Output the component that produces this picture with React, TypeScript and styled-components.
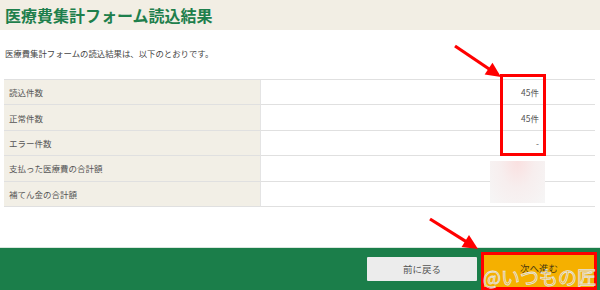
import React from "react";
import styled, { createGlobalStyle } from "styled-components";

const Global = createGlobalStyle`
  html, body { margin: 0; padding: 0; background: #fff; }
  body { font-family: "Noto Sans CJK JP", "Noto Sans", sans-serif; }
`;

const Page = styled.div`
  position: relative;
  width: 600px;
  height: 290px;
  overflow: hidden;
  background: #fff;
  display: flex;
  flex-direction: column;
`;

const Header = styled.header`
  height: 30px;
  flex-shrink: 0;
  background: #f2eee4;
  display: flex;
  align-items: center;
  padding-left: 5px;
`;

const Title = styled.h1`
  margin: 0;
  font-size: 16px;
  font-weight: 700;
  color: #1e7f4c;
  line-height: 1;
`;

const Lead = styled.p`
  margin: 17px 0 0 5px;
  font-size: 8.4px;
  color: #444;
  line-height: 12px;
`;

const Table = styled.div`
  margin: 20px 5px 0 4px;
  display: grid;
  grid-template-columns: 257px 1fr;
  border-top: 1.5px solid #e0e0e0;
`;

const LabelCell = styled.div`
  height: 24.4px;
  background: #f2efe6;
  border-bottom: 1.5px solid #e0e0e0;
  border-right: 1.5px solid #e4e4e4;
  display: flex;
  align-items: center;
  padding-left: 5px;
  font-size: 8.5px;
  color: #555;
`;

const ValueCell = styled.div`
  height: 24.4px;
  border-bottom: 1.5px solid #e0e0e0;
  display: flex;
  align-items: center;
  justify-content: flex-end;
  padding-right: 56px;
  font-size: 8.5px;
  color: #555;
`;

const Footer = styled.footer`
  margin-top: auto;
  height: 43px;
  flex-shrink: 0;
  background: #1b7e4a;
  border-top: 1px solid #d9e6de;
  display: flex;
  align-items: flex-start;
  justify-content: flex-end;
  gap: 6px;
  padding: 0 5px 0 0;
  box-sizing: border-box;
`;

const Button = styled.button<{ $primary?: boolean }>`
  font-family: "Noto Sans CJK JP", sans-serif;
  border: none;
  margin: ${(p) => (p.$primary ? "7px 0 0" : "9px 0 0")};
  width: ${(p) => (p.$primary ? "112px" : "110px")};
  height: ${(p) => (p.$primary ? "32px" : "24px")};
  background: ${(p) => (p.$primary ? "#f5b000" : "#ececec")};
  color: ${(p) => (p.$primary ? "#4a3a10" : "#555")};
  font-size: 9.5px;
  border-radius: 1px;
  padding: ${(p) => (p.$primary ? "0 0 6px" : "0")};
`;

const RedBox = styled.div<{ $x: number; $y: number; $w: number; $h: number }>`
  position: absolute;
  left: ${(p) => p.$x}px;
  top: ${(p) => p.$y}px;
  width: ${(p) => p.$w}px;
  height: ${(p) => p.$h}px;
  border: 3px solid #f00;
  box-sizing: border-box;
  pointer-events: none;
`;

const Smudge = styled.div`
  position: absolute;
  left: 490px;
  top: 161px;
  width: 55px;
  height: 42px;
  background: radial-gradient(ellipse at 50% 0%, #fae0e0 0%, #f7eeee 45%, #f6f6f6 100%);
`;

const Watermark = styled.div`
  position: absolute;
  left: 483px;
  top: 263px;
  font-size: 19px;
  line-height: 28px;
  white-space: nowrap;
  color: rgba(255, 255, 255, 0.08);
  -webkit-text-stroke: 0.8px #e4e4e4;
  pointer-events: none;
`;

const Overlay = styled.svg`
  position: absolute;
  left: 0;
  top: 0;
  pointer-events: none;
`;

function Arrow({ x1, y1, x2, y2 }: { x1: number; y1: number; x2: number; y2: number }) {
  const dx = x2 - x1;
  const dy = y2 - y1;
  const len = Math.hypot(dx, dy);
  const ux = dx / len;
  const uy = dy / len;
  const head = 15;
  const half = 7;
  const bx = x2 - ux * head;
  const by = y2 - uy * head;
  const px = -uy;
  const py = ux;
  return (
    <g>
      <line x1={x1} y1={y1} x2={bx + ux * 2} y2={by + uy * 2} stroke="#f00" strokeWidth={3.2} />
      <polygon
        points={`${x2},${y2} ${bx + px * half},${by + py * half} ${bx - px * half},${by - py * half}`}
        fill="#f00"
      />
    </g>
  );
}

const rows: [string, string][] = [
  ["読込件数", "45件"],
  ["正常件数", "45件"],
  ["エラー件数", "-"],
  ["支払った医療費の合計額", ""],
  ["補てん金の合計額", ""],
];

export default function App() {
  return (
    <>
      <Global />
      <Page>
        <Header>
          <Title>医療費集計フォーム読込結果</Title>
        </Header>
        <Lead>医療費集計フォームの読込結果は、以下のとおりです。</Lead>
        <Table>
          {rows.map(([label, value]) => (
            <React.Fragment key={label}>
              <LabelCell>{label}</LabelCell>
              <ValueCell>{value}</ValueCell>
            </React.Fragment>
          ))}
        </Table>
        <Footer>
          <Button>前に戻る</Button>
          <Button $primary>次へ進む</Button>
        </Footer>
        <Smudge />
        <RedBox $x={500} $y={74} $w={46} $h={82} />
        <RedBox $x={481} $y={252} $w={116} $h={38} />
        <Watermark>@いつもの匠</Watermark>
        <Overlay width={600} height={290} viewBox="0 0 600 290">
          <Arrow x1={455} y1={46} x2={501} y2={77} />
          <Arrow x1={430} y1={219} x2={478} y2={249} />
        </Overlay>
      </Page>
    </>
  );
}
